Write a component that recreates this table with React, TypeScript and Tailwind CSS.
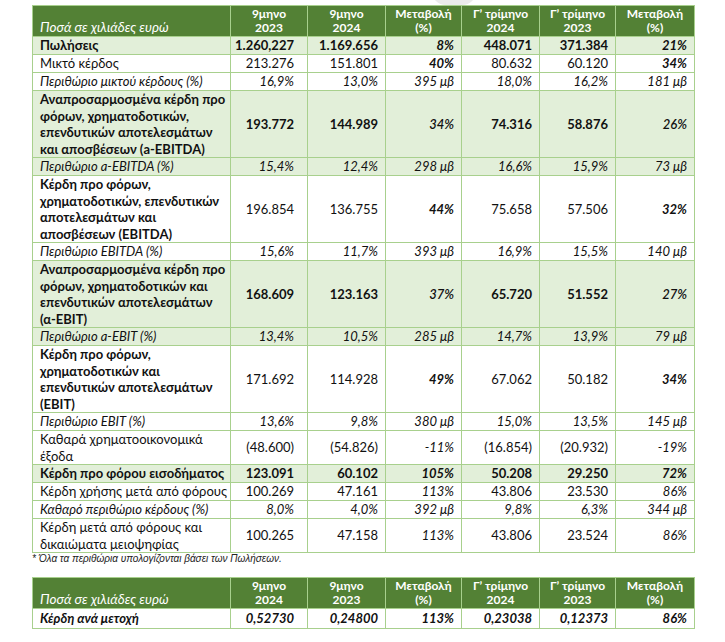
import React from "react";

type Row = {
  label: string[];
  green?: boolean;
  labelCls: string;
  valCls: string;
  chgCls: string;
  v: string[];
};

const B = "font-bold";
const I = "italic";
const BI = "font-bold italic";
const SI = "font-semibold italic";

const rows: Row[] = [
  { label: ["Πωλήσεις"], green: true, labelCls: B, valCls: B, chgCls: BI, v: ["1.260,227", "1.169.656", "8%", "448.071", "371.384", "21%"] },
  { label: ["Μικτό κέρδος"], labelCls: "", valCls: "", chgCls: BI, v: ["213.276", "151.801", "40%", "80.632", "60.120", "34%"] },
  { label: ["Περιθώριο μικτού κέρδους (%)"], labelCls: I, valCls: I, chgCls: I, v: ["16,9%", "13,0%", "395 μβ", "18,0%", "16,2%", "181 μβ"] },
  { label: ["Αναπροσαρμοσμένα κέρδη προ", "φόρων, χρηματοδοτικών,", "επενδυτικών αποτελεσμάτων", "και αποσβέσεων (a-EBITDA)"], green: true, labelCls: B, valCls: B, chgCls: SI, v: ["193.772", "144.989", "34%", "74.316", "58.876", "26%"] },
  { label: ["Περιθώριο a-EBITDA (%)"], green: true, labelCls: I, valCls: I, chgCls: I, v: ["15,4%", "12,4%", "298 μβ", "16,6%", "15,9%", "73 μβ"] },
  { label: ["Κέρδη προ φόρων,", "χρηματοδοτικών, επενδυτικών", "αποτελεσμάτων και", "αποσβέσεων (EBITDA)"], labelCls: B, valCls: "", chgCls: BI, v: ["196.854", "136.755", "44%", "75.658", "57.506", "32%"] },
  { label: ["Περιθώριο EBITDA (%)"], labelCls: I, valCls: I, chgCls: I, v: ["15,6%", "11,7%", "393 μβ", "16,9%", "15,5%", "140 μβ"] },
  { label: ["Αναπροσαρμοσμένα κέρδη προ", "φόρων, χρηματοδοτικών και", "επενδυτικών αποτελεσμάτων", "(α-EBIT)"], green: true, labelCls: B, valCls: B, chgCls: SI, v: ["168.609", "123.163", "37%", "65.720", "51.552", "27%"] },
  { label: ["Περιθώριο a-EBIT (%)"], green: true, labelCls: I, valCls: I, chgCls: I, v: ["13,4%", "10,5%", "285 μβ", "14,7%", "13,9%", "79 μβ"] },
  { label: ["Κέρδη προ φόρων,", "χρηματοδοτικών και", "επενδυτικών αποτελεσμάτων", "(EBIT)"], labelCls: B, valCls: "", chgCls: BI, v: ["171.692", "114.928", "49%", "67.062", "50.182", "34%"] },
  { label: ["Περιθώριο EBIT (%)"], labelCls: I, valCls: I, chgCls: I, v: ["13,6%", "9,8%", "380 μβ", "15,0%", "13,5%", "145 μβ"] },
  { label: ["Καθαρά χρηματοοικονομικά", "έξοδα"], labelCls: "", valCls: "", chgCls: I, v: ["(48.600)", "(54.826)", "-11%", "(16.854)", "(20.932)", "-19%"] },
  { label: ["Κέρδη προ φόρου εισοδήματος"], green: true, labelCls: B, valCls: B, chgCls: BI, v: ["123.091", "60.102", "105%", "50.208", "29.250", "72%"] },
  { label: ["Κέρδη χρήσης μετά από φόρους"], labelCls: "", valCls: "", chgCls: I, v: ["100.269", "47.161", "113%", "43.806", "23.530", "86%"] },
  { label: ["Καθαρό περιθώριο κέρδους (%)"], labelCls: I, valCls: I, chgCls: I, v: ["8,0%", "4,0%", "392 μβ", "9,8%", "6,3%", "344 μβ"] },
  { label: ["Κέρδη μετά από φόρους και", "δικαιώματα μειοψηφίας"], labelCls: "", valCls: "", chgCls: I, v: ["100.265", "47.158", "113%", "43.806", "23.524", "86%"] },
];

const Cols = () => (
  <colgroup>
    <col className="w-[198px]" />
    <col className="w-[77px]" />
    <col className="w-[78px]" />
    <col className="w-[76px]" />
    <col className="w-[78px]" />
    <col className="w-[76px]" />
    <col className="w-[79px]" />
  </colgroup>
);

const Header = ({ heads }: { heads: string[][] }) => (
  <tr className="bg-[#538135] text-white">
    <td className="border border-[#a8d08d] pl-[7px] align-bottom italic text-[13.5px] leading-[16px] pb-[1px] h-[31px]">
      Ποσά σε χιλιάδες ευρώ
    </td>
    {heads.map((h, i) => (
      <td key={i} className="border border-[#a8d08d] text-center font-bold align-middle text-[12px] leading-[14px]">
        <div>{h[0]}</div>
        <div>{h[1]}</div>
      </td>
    ))}
  </tr>
);

const heads1 = [
  ["9μηνο", "2023"],
  ["9μηνο", "2024"],
  ["Μεταβολή", "(%)"],
  ["Γ’ τρίμηνο", "2024"],
  ["Γ’ τρίμηνο", "2023"],
  ["Μεταβολή", "(%)"],
];
const heads2 = [
  ["9μηνο", "2024"],
  ["9μηνο", "2023"],
  ["Μεταβολή", "(%)"],
  ["Γ’ τρίμηνο", "2024"],
  ["Γ’ τρίμηνο", "2023"],
  ["Μεταβολή", "(%)"],
];

export default function App() {
  const font = { fontFamily: "Lato, 'Open Sans', sans-serif" };
  return (
    <div className="w-[725px] h-[642px] bg-white relative overflow-hidden text-[#111]" style={font}>
      <div className="absolute left-[432px] top-[-22px] w-[44px] h-[27px] rounded-full bg-[#ebebeb]" />
      <div className="relative pt-[5px] pl-[32px]">
        <table className="table-fixed border-collapse w-[662px] text-[13px] leading-[16.5px]">
          <Cols />
          <tbody>
            <Header heads={heads1} />
            {rows.map((r, ri) => (
              <tr key={ri} className={r.green ? "bg-[#e2efd9]" : "bg-white"}>
                <td className={`border border-[#a8d08d] pl-[7px] h-[18px] align-middle ${r.labelCls}`}>
                  {r.label.map((l, li) => (
                    <div key={li}>{l}</div>
                  ))}
                </td>
                {r.v.map((v, vi) => {
                  const isChg = vi === 2 || vi === 5;
                  return (
                    <td
                      key={vi}
                      className={`border border-[#a8d08d] text-right align-middle ${vi === 0 ? "pr-[13px]" : "pr-[7px]"} ${isChg ? r.chgCls : r.valCls}`}
                    >
                      {v}
                    </td>
                  );
                })}
              </tr>
            ))}
          </tbody>
        </table>
        <div className="mt-0 text-[10px] italic leading-[12px] text-[#222]" style={{ fontFamily: "'Liberation Sans', Arial, sans-serif" }}>
          * Όλα τα περιθώρια υπολογίζονται βάσει των Πωλήσεων.
        </div>
        <table className="mt-[12px] table-fixed border-collapse w-[662px] text-[13px] leading-[16.5px]">
          <Cols />
          <tbody>
            <Header heads={heads2} />
            <tr className="bg-white">
              <td className="border border-[#a8d08d] pl-[7px] h-[20px] font-bold italic">Κέρδη ανά μετοχή</td>
              {["0,52730", "0,24800", "113%", "0,23038", "0,12373", "86%"].map((v, vi) => (
                <td key={vi} className={`border border-[#a8d08d] text-right font-bold italic ${vi === 0 ? "pr-[13px]" : "pr-[7px]"}`}>
                  {v}
                </td>
              ))}
            </tr>
          </tbody>
        </table>
      </div>
    </div>
  );
}
